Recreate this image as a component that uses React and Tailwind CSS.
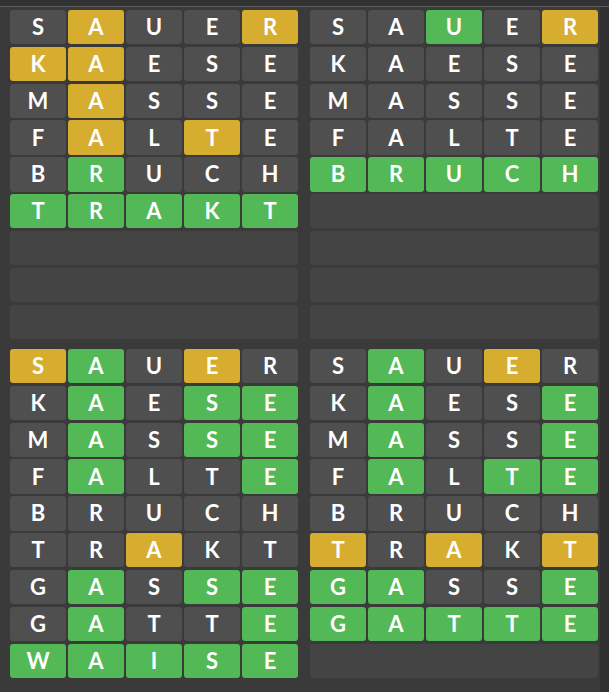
import React from "react";

const G = "g", Y = "y", N = "n";

const boards = [
  {
    rows: [
      ["SAUER", "nynny"],
      ["KAESE", "yynnn"],
      ["MASSE", "nynnn"],
      ["FALTE", "nynyn"],
      ["BRUCH", "ngnnn"],
      ["TRAKT", "ggggg"],
    ],
  },
  {
    rows: [
      ["SAUER", "nngny"],
      ["KAESE", "nnnnn"],
      ["MASSE", "nnnnn"],
      ["FALTE", "nnnnn"],
      ["BRUCH", "ggggg"],
    ],
  },
  {
    rows: [
      ["SAUER", "ygnyn"],
      ["KAESE", "ngngg"],
      ["MASSE", "ngngg"],
      ["FALTE", "ngnng"],
      ["BRUCH", "nnnnn"],
      ["TRAKT", "nnynn"],
      ["GASSE", "ngngg"],
      ["GATTE", "ngnng"],
      ["WAISE", "ggggg"],
    ],
  },
  {
    rows: [
      ["SAUER", "ngnyn"],
      ["KAESE", "ngnng"],
      ["MASSE", "ngnng"],
      ["FALTE", "ngngg"],
      ["BRUCH", "nnnnn"],
      ["TRAKT", "ynyny"],
      ["GASSE", "ggnng"],
      ["GATTE", "ggggg"],
    ],
  },
];

function Tile({ ch, c }) {
  const bg =
    c === G ? "bg-[#53b856]" : c === Y ? "bg-[#d6ad2f]" : "bg-[#4f4f4f]";
  return (
    <div
      className={`${bg} rounded-[3px] flex items-center justify-center text-white text-[22px] font-bold leading-none`}
      style={{ fontFamily: "Lato, 'Open Sans', sans-serif" }}
    >
      {ch}
    </div>
  );
}

function Board({ rows }) {
  const empties = 9 - rows.length;
  return (
    <div className="grid grid-rows-9 gap-y-[2.5px] h-[329px] w-[288px]">
      {rows.map(([word, colors], i) => (
        <div key={i} className="grid grid-cols-5 gap-x-[2px]">
          {word.split("").map((ch, j) => (
            <Tile key={j} ch={ch} c={colors[j]} />
          ))}
        </div>
      ))}
      {Array.from({ length: empties }).map((_, i) => (
        <div key={"e" + i} className="bg-[#444444] rounded-[3px]" />
      ))}
    </div>
  );
}

export default function App() {
  return (
    <div className="w-[609px] h-[692px] bg-[#333333] flex flex-col overflow-hidden">
      <div className="h-[6px] bg-[#323232]" />
      <div className="flex-1 flex border-t border-[#5c5c5c]">
        <div className="w-[600px] bg-[#3a3a3a] pt-[3px] pl-[10px]">
          <div className="grid grid-cols-[288px_288px] gap-x-[12px] gap-y-[10px]">
            {boards.map((b, i) => (
              <Board key={i} rows={b.rows} />
            ))}
          </div>
        </div>
        <div className="flex-1 bg-[#303030]" />
      </div>
    </div>
  );
}
